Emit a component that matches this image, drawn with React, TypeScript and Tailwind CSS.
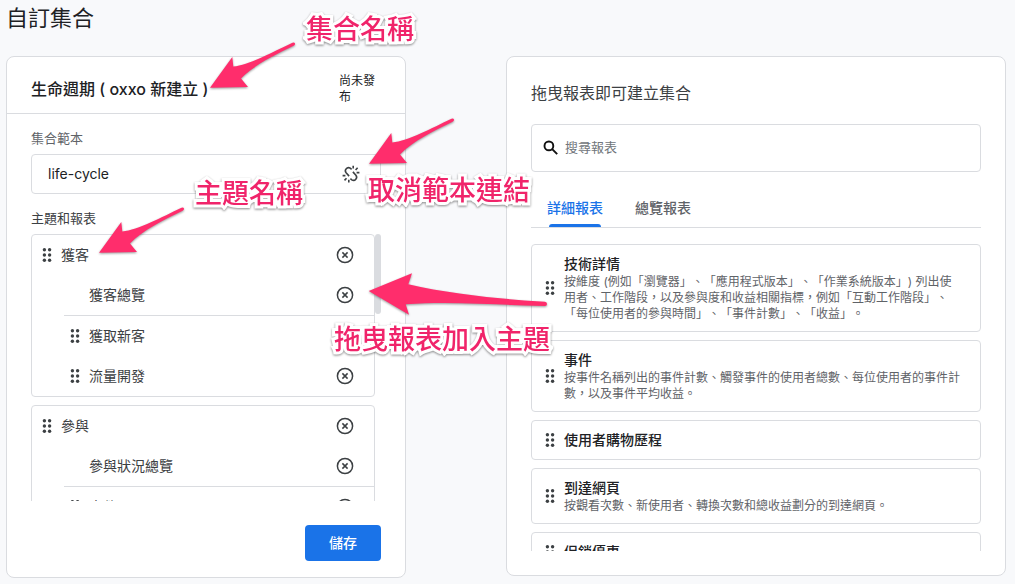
import { useState } from "react";

const topics = [
  { name: '獲客', overview: '獲客總覽', reports: ['獲取新客', '流量開發'] },
  { name: '參與', overview: '參與狀況總覽', reports: ['事件', '轉換'] },
]

const details = [
  { title: '技術詳情', text: '按維度 (例如「瀏覽器」、「應用程式版本」、「作業系統版本」) 列出使\n用者、工作階段，以及參與度和收益相關指標，例如「互動工作階段」、\n「每位使用者的參與時間」、「事件計數」、「收益」。' },
  { title: '事件', text: '按事件名稱列出的事件計數、觸發事件的使用者總數、每位使用者的事件計\n數，以及事件平均收益。' },
  { title: '使用者購物歷程', text: '' },
  { title: '到達網頁', text: '按觀看次數、新使用者、轉換次數和總收益劃分的到達網頁。' },
  { title: '促銷優惠', text: '' },
]

function DragDots() {
  return (
    <svg className="w-3 h-4 shrink-0 fill-[#3c4043]" viewBox="0 0 12 16">
      <circle cx="3.4" cy="2.8" r="1.7" />
      <circle cx="8.6" cy="2.8" r="1.7" />
      <circle cx="3.4" cy="8" r="1.7" />
      <circle cx="8.6" cy="8" r="1.7" />
      <circle cx="3.4" cy="13.2" r="1.7" />
      <circle cx="8.6" cy="13.2" r="1.7" />
    </svg>
  )
}

function RemoveButton({ label }: { label: string }) {
  return (
    <button type="button" aria-label={`移除${label}`} className="ml-auto shrink-0">
      <svg className="w-[18px] h-[18px] block" viewBox="0 0 18 18" fill="none" stroke="#3c4043">
        <circle cx="9" cy="9" r="7.6" strokeWidth="1.5" />
        <path d="M6.4 6.4l5.2 5.2M11.6 6.4l-5.2 5.2" strokeWidth="1.5" />
      </svg>
    </button>
  )
}

function UnlinkIcon() {
  return (
    <svg className="w-[18px] h-[18px] block" viewBox="0 0 18 18" fill="none" stroke="#3c4043" strokeWidth="1.6">
      <path d="M9.6 4.3L8.2 3.2a3 3 0 0 0-4 .6a3 3 0 0 0-.1 3.9l3 3.4" />
      <path d="M10.9 6.9l3 3.4a3 3 0 0 1-.1 3.9a3 3 0 0 1-4 .6L8.4 13.7" />
      <path d="M11.2 3.4V.8M13.6 5l2-2.2M14.6 7.6h2.8M.6 10.6h2.8M4.5 13.2l-2 2.2M6.8 14.8v2.6" />
    </svg>
  )
}

function Note({ className, children }: { className: string, children: string }) {
  return (
    <p className={`absolute whitespace-nowrap text-[27px] leading-8 font-medium text-[#f0246a] [-webkit-text-stroke:6px_white] [paint-order:stroke_fill] drop-shadow-[0_1px_1px_rgba(0,0,0,0.45)] ${className}`}>
      {children}
    </p>
  )
}

function Arrow({ className }: { className: string }) {
  return (
    <svg className={`absolute w-[88px] h-12 drop-shadow-[0_1px_1px_rgba(0,0,0,0.4)] ${className}`} viewBox="0 0 88 48" fill="#ff2d6c">
      <path d="M1 46.700L23.300 16L24.300 25.500C40 24 64 11 83.500 1.800Q85.500 1.200 86 2.600Q86.300 4 84.600 4.800C66 14 45 24 32 37.500L39 46Z" />
    </svg>
  )
}

export default function App() {
  const [template, setTemplate] = useState('life-cycle')
  const [search, setSearch] = useState('')
  const [tab, setTab] = useState('詳細報表')

  return (
    <div lang="zh-Hant" className="relative min-h-screen overflow-hidden bg-[#f8f9fb] pl-[6px] pr-[9px] pb-[6px] text-[#3c4043] font-['Inter','Noto_Sans_CJK_TC',sans-serif] [text-spacing-trim:space-all]">
      <h1 className="h-14 pt-1 text-[22px] leading-7 text-[#202124]">自訂集合</h1>

      <div className="grid grid-cols-[4fr_5fr] items-start gap-[100px]">
        <section className="min-w-0 rounded-lg border border-[#dadce0] bg-white">
          <header className="flex items-center border-b border-[#dadce0] px-6 pt-4 pb-2">
            <h2 className="text-base font-medium text-[#202124]">生命週期 ( oxxo 新建立 )</h2>
            <span className="ml-auto w-[42px] text-xs text-[#202124]">尚未發布</span>
          </header>

          <div className="px-6 pt-4 pb-4">
            <label htmlFor="template" className="block text-[13px] leading-4 text-[#5f6368]">集合範本</label>
            <div className="mt-2 flex h-10 items-center rounded border border-[#dadce0] pl-4 pr-5">
              <input
                id="template"
                type="text"
                value={template}
                onChange={(event) => setTemplate(event.target.value)}
                className="min-w-0 flex-1 text-sm text-[#202124] outline-none"></input>
              <button type="button" aria-label="取消範本連結">
                <UnlinkIcon />
              </button>
            </div>

            <h3 className="mt-4 text-[13px] leading-4 text-[#3c4043]">主題和報表</h3>
            <div className="mt-2 flex h-[267px] overflow-hidden">
              <div className="min-w-0 flex-1">
                {topics.map((topic) => (
                  <div key={topic.name} className="mb-2 rounded border border-[#dadce0] text-sm">
                    <div className="flex h-10 items-center gap-2 pl-[9px] pr-5">
                      <DragDots />
                      {topic.name}
                      <RemoveButton label={topic.name} />
                    </div>
                    <div className="ml-8 flex h-[41px] items-center border-b border-[#dadce0] pl-[25px] pr-5">
                      {topic.overview}
                      <RemoveButton label={topic.overview} />
                    </div>
                    {topic.reports.map((report) => (
                      <div key={report} className="ml-8 flex h-10 items-center gap-2 pl-[5px] pr-5">
                        <DragDots />
                        {report}
                        <RemoveButton label={report} />
                      </div>
                    ))}
                  </div>
                ))}
              </div>
              <div className="h-20 w-[6px] rounded-full bg-[#dadce0]"></div>
            </div>

            <div className="mt-6 flex justify-end">
              <button type="button" className="h-9 rounded bg-[#1a73e8] px-6 text-sm font-medium text-white">儲存</button>
            </div>
          </div>
        </section>

        <section className="min-w-0 rounded-lg border border-[#dadce0] bg-white px-6 pt-6 pb-6">
          <h2 className="text-base leading-6">拖曳報表即可建立集合</h2>
          <div className="mt-[19px] flex h-12 items-center gap-[6px] rounded border border-[#dadce0] px-[11px]">
            <svg className="w-4 h-4 shrink-0" viewBox="0 0 16 16" fill="none" stroke="#111" strokeWidth="1.9">
              <circle cx="5.900" cy="5.900" r="4.400" />
              <path d="M9.200 9.200l5 5" />
            </svg>
            <input
              type="text"
              aria-label="搜尋報表"
              placeholder="搜尋報表"
              value={search}
              onChange={(event) => setSearch(event.target.value)}
              className="min-w-0 flex-1 text-[13px] outline-none placeholder:text-[#70757a]"></input>
          </div>

          <div className="mt-5 flex h-9 gap-8 border-b border-[#dadce0] px-4">
            {['詳細報表', '總覽報表'].map((name) => (
              <button
                key={name}
                type="button"
                onClick={() => setTab(name)}
                className={tab === name ? 'flex flex-col items-center text-sm font-medium text-[#1a73e8]' : 'flex flex-col items-center text-sm font-medium text-[#5f6368]'}>
                <span className="py-[6px]">{name}</span>
                {tab === name && <span className="h-[3px] w-[52px] rounded-t bg-[#1a73e8]"></span>}
              </button>
            ))}
          </div>

          <ul className="mt-4 flex h-[307px] flex-col gap-2 overflow-hidden">
            {details.map((item) => (
              <li key={item.title} className="flex shrink-0 items-center gap-2 rounded border border-[#dadce0] py-[9px] pl-3 pr-[9px]">
                <DragDots />
                <div className="min-w-0">
                  <h3 className="text-sm font-medium text-[#202124]">{item.title}</h3>
                  {item.text && <p className="whitespace-pre-line text-xs text-[#5f6368]">{item.text}</p>}
                </div>
              </li>
            ))}
          </ul>
        </section>
      </div>

      {/* notes pinned over the page */}
      <div className="pointer-events-none">
        <Arrow className="left-[209px] top-[41px]" />
        <Arrow className="left-[368px] top-[117px]" />
        <Arrow className="left-[98px] top-[206px]" />
        <svg className="absolute left-[368px] top-[272px] w-[180px] h-11 drop-shadow-[0_1px_1px_rgba(0,0,0,0.4)]" viewBox="0 0 180 44" fill="#ff2d6c">
          <path d="M.7 19L44 1.300L40.300 12.300C82 22 130 27 177 29.700Q179 30 179 32Q179 34 177 34C130 33 82 29 37.700 32.300L41 42.700Z" />
        </svg>
        <Note className="left-[306px] top-[14px]">集合名稱</Note>
        <Note className="left-[368px] top-[175px]">取消範本連結</Note>
        <Note className="left-[195px] top-[178px]">主題名稱</Note>
        <Note className="left-[334px] top-[324px]">拖曳報表加入主題</Note>
      </div>
    </div>
  )
}
